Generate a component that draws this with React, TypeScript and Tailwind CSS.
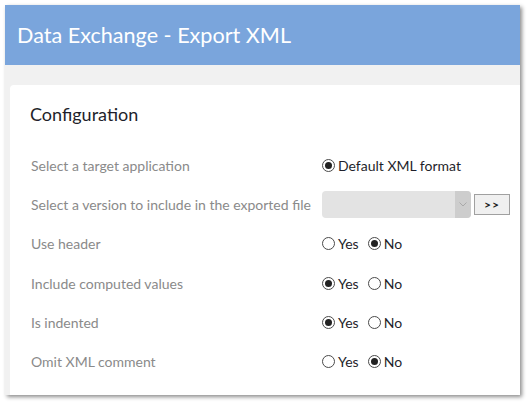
import React from "react";

type Opt = { label: string; checked: boolean };

function Radio({ checked }: { checked: boolean }) {
  return (
    <span className="inline-flex size-[13px] shrink-0 items-center justify-center rounded-full border border-[#4a4a4a] bg-white">
      {checked && <span className="size-[7px] rounded-full bg-[#222]" />}
    </span>
  );
}

function RadioGroup({ options }: { options: Opt[] }) {
  return (
    <div className="flex items-center gap-[9px]">
      {options.map((o) => (
        <label key={o.label} className="flex items-center gap-[3px] text-[#1f1f2b]">
          <Radio checked={o.checked} />
          <span>{o.label}</span>
        </label>
      ))}
    </div>
  );
}

const yesNo = (yes: boolean): Opt[] => [
  { label: "Yes", checked: yes },
  { label: "No", checked: !yes },
];

const ROWS: { label: string; control: React.ReactNode }[] = [
  { label: "Select a target application", control: <RadioGroup options={[{ label: "Default XML format", checked: true }]} /> },
  {
    label: "Select a version to include in the exported file",
    control: (
      <div className="flex items-center gap-[3px]">
        <div className="flex h-[27px] w-[149px] overflow-hidden rounded-[4px] bg-[#e3e3e3]">
          <div className="flex-1" />
          <div className="flex w-[16px] items-center justify-center bg-[#cdcdcd]">
            <svg width="8" height="5" viewBox="0 0 8 5" fill="none" stroke="#a9a9a9" strokeWidth="1">
              <path d="M0.5 0.5 L4 4 L7.5 0.5" />
            </svg>
          </div>
        </div>
        <button className="h-[21px] w-[36px] border border-[#a0a0a0] bg-[#f0f0f0] text-[12px] font-bold leading-none tracking-[1px] text-[#222]">
          &gt;&gt;
        </button>
      </div>
    ),
  },
  { label: "Use header", control: <RadioGroup options={yesNo(false)} /> },
  { label: "Include computed values", control: <RadioGroup options={yesNo(true)} /> },
  { label: "Is indented", control: <RadioGroup options={yesNo(true)} /> },
  { label: "Omit XML comment", control: <RadioGroup options={yesNo(false)} /> },
];

export default function App() {
  return (
    <div className="h-[405px] w-[529px] bg-white pl-[5px] pt-[5px] font-['Lato',sans-serif]">
      <div className="flex h-[390px] w-[515px] flex-col bg-[#f1f1f1] shadow-[2px_2px_4px_rgba(0,0,0,0.45)]">
        <div className="flex h-[60px] items-center bg-[#7aa5dc] pl-[12px] text-[21.6px] text-white">
          Data Exchange - Export XML
        </div>
        <div className="flex flex-1 flex-col pl-[5px] pt-[20px]">
          <div className="flex-1 rounded-tl-[4px] bg-white pl-[21px] pt-[18px]">
            <h2 className="-ml-[1px] text-[18px] leading-[22px] text-[#1f1f2b]">Configuration</h2>
            <div className="mt-[21px] text-[14px]">
              {ROWS.map((r) => (
                <div key={r.label} className="grid h-[39.2px] grid-cols-[291px_1fr] items-center">
                  <div className="text-[#8a8a8a]">{r.label}</div>
                  <div>{r.control}</div>
                </div>
              ))}
            </div>
          </div>
        </div>
      </div>
    </div>
  );
}
